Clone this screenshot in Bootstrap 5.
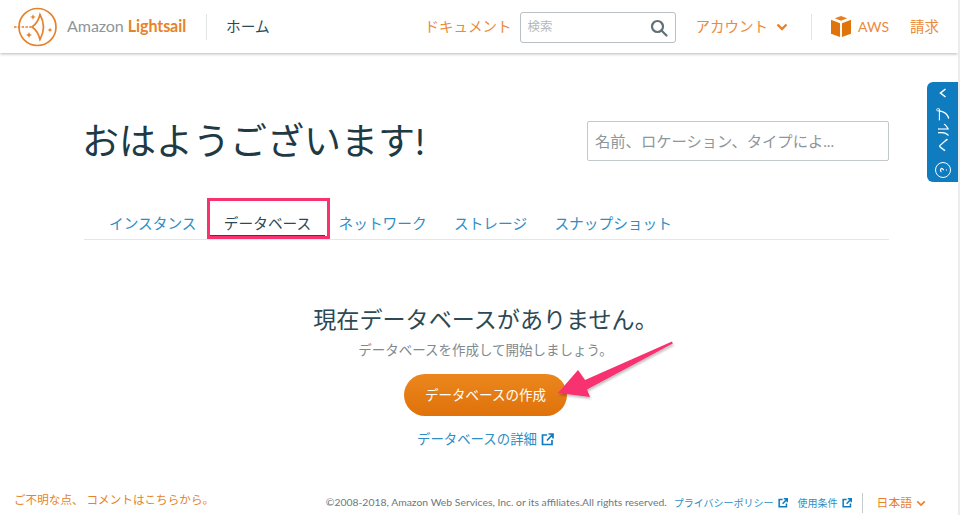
<!DOCTYPE html>
<html lang="ja">
<head>
    <meta charset="UTF-8">
    <meta name="viewport" content="width=device-width, initial-scale=1.0">
    <title>Amazon Lightsail</title>
    <link href="https://cdn.jsdelivr.net/npm/bootstrap@5.3.2/dist/css/bootstrap.min.css" rel="stylesheet">
    <style>
        html { background: #ececec; }
        html, body { height: 515px; overflow: hidden; }
        body {
            font-family: Lato, "Noto Sans CJK JP", sans-serif;
            font-weight: 400;
            color: #2b4a55;
            background: #fff;
            position: relative;
            width: 958px;
        }
        a { text-decoration: none; }

        /* top bar */
        .top-bar {
            height: 53px;
            padding: 0 19px 0 14px;
            background: #fff;
            box-shadow: 0 1px 3px rgba(0, 0, 0, .28);
            font-size: 14.5px;
        }
        .brand { font-size: 16.1px; color: #8d9699; margin-left: 9px; letter-spacing: -.1px; }
        .brand b { color: #e8822a; font-weight: 700; }
        .top-bar .sep { width: 1px; height: 26px; background: #e1e4e5; }
        .home-link { color: #2b4a55; margin-left: 19px; font-size: 14.7px; }
        .orange { color: #ea8a3c; }
        .top-search { width: 156px; height: 31px; border: 1px solid #b9c0c3; border-radius: 3px; padding: 0 7px; margin: 2px 20px 0 8px; }
        .top-search span { font-size: 12.5px; color: #b5b9bb; }
        .aws-link { font-size: 14px; margin-left: 7px; }

        /* greeting and tabs */
        .content { padding: 0 69px 0 84px; }
        .hello-row { padding-top: 68px; height: 148px; }
        .hello-row h1 { font-size: 37px; font-weight: 400; margin: -1px 0 0 -2px; line-height: 42px; color: #1e3a45; }
        .filter-box { width: 302px; height: 40px; border: 1px solid #c3c8ca; border-radius: 2px; padding: 0 7px; font-size: 15.3px; color: #8e979b; }
        .tabs { height: 39px; border-bottom: 1px solid #e4e6e7; padding-left: 25px; font-size: 14.7px; gap: 27.3px; }
        .tabs .nav-link { padding: 12px 0 0; color: #2e8ec4; line-height: 20px; height: 36px; }
        .tabs .nav-link.active { color: #2b4a55; border-bottom: 2px solid #2b4a55; padding: 12px 14px 0; margin: 0 -14px; }

        /* empty state */
        .empty { padding-top: 62px; margin-left: -2px; }
        .empty h2 { font-size: 23.1px; font-weight: 400; line-height: 34px; margin: 0; color: #2b4a55; }
        .empty p { font-size: 13.5px; color: #7f8a8f; margin: 5px 0 14px; line-height: 19px; }
        .btn-create {
            width: 163px; height: 42px; border: 0; border-radius: 21px; padding: 0;
            background: linear-gradient(#ea871d, #e0720a); color: #fff; font-size: 13.5px;
        }
        .btn-create:hover { background: #e0720a; color: #fff; }
        .detail-link { color: #2e8ec4; font-size: 13.4px; margin-top: 13px; line-height: 20px; }
        .ext { color: #0f7cc0; }

        /* footer */
        .page-foot { position: absolute; left: 14px; right: 32px; top: 490px; height: 26px; }
        .page-foot .note { font-size: 11.6px; color: #e8822a; margin-bottom: 6px; }
        .page-foot .copy { color: #6d777c; font-size: 10.4px; }
        .page-foot a { color: #2e8ec4; font-size: 10px; }
        .page-foot .ext { margin-left: 4px; }
        .page-foot .gap-a { margin-left: 7px; }
        .page-foot .gap-b { margin-left: 10px; }
        .page-foot .vbar { width: 1px; height: 20px; background: #c6cbcd; margin: 0 14px 0 10px; }
        .page-foot .lang { color: #e8822a; font-size: 11.8px; }

        /* help tab on the right edge */
        .help-tab {
            position: absolute; left: 927px; top: 82px; width: 31px; height: 100px;
            background: #0f7cc0; border-radius: 6px 0 0 6px; color: #fff; padding: 6px 0 3px;
        }
        .help-tab .label { writing-mode: vertical-rl; text-orientation: sideways; transform: rotate(180deg); font-size: 14px; line-height: 1; letter-spacing: 1px; }

        /* screenshot annotations */
        .mark-box { position: absolute; left: 207px; top: 198px; width: 123px; height: 41px; border: 3px solid #f8316f; }
        .mark-arrow { position: absolute; left: 540px; top: 330px; }
    </style>
</head>
<body>

<nav class="navbar top-bar d-flex align-items-center flex-nowrap">
    <div class="d-flex align-items-center">
        <svg width="44" height="40" viewBox="0 0 44 40" fill="none" stroke="#e8822a">
            <circle cx="23.500" cy="20" r="18.500" stroke-width="1.700"/>
            <path d="M0 20h17" stroke-width="1.500" stroke-dasharray="2.500 1.300"/>
            <path d="M18 20Q24 16 26 7.500Q33 20 26 32.500Q24 24 18 20z" fill="#fff" stroke-width="1.700"/>
            <path d="M19 7l.8 2.200 2.200.8-2.200.8-.8 2.200-.8-2.200-2.200-.8 2.200-.8zM15 25l.9 2.100 2.100.9-2.100.9-.9 2.100-.9-2.100-2.100-.9 2.100-.9zM36 20.500l.7 1.800 1.800.7-1.800.7-.7 1.800-.7-1.800-1.800-.7 1.800-.7z" fill="#e8822a" stroke="none"/>
        </svg>
        <span class="brand">Amazon <b>Lightsail</b></span>
        <span class="sep" style="margin-left:20px"></span>
        <a class="home-link" href="#">ホーム</a>
    </div>
    <div class="d-flex align-items-center">
        <a class="orange" href="#">ドキュメント</a>
        <div class="top-search d-flex align-items-center justify-content-between">
            <span>検索</span>
            <svg width="18" height="18" viewBox="0 0 18 18" fill="none" stroke="#5f7076" stroke-width="2.200">
                <circle cx="7.500" cy="7.500" r="5.500"/>
                <path d="M11.500 11.500L16.500 16.500" stroke-linecap="round"/>
            </svg>
        </div>
        <a class="orange" href="#">アカウント</a>
        <svg class="ms-2" width="12" height="8" viewBox="0 0 12 8" fill="none" stroke="#e8822a" stroke-width="2.400"><path d="M1.500 1.500L6 6l4.500-4.500"/></svg>
        <span class="sep" style="margin:0 19px 0 23px"></span>
        <svg width="20" height="21" viewBox="0 0 21 22">
            <path d="M10.500 0L17 2.400 10.500 5 4 2.400z" fill="#e8801a"/>
            <path d="M0 4l9.500 3.500V22L0 18.500z" fill="#e0740c"/>
            <path d="M21 4l-9.500 3.500V22l9.500-3.500z" fill="#e0740c"/>
        </svg>
        <a class="orange aws-link" href="#">AWS</a>
        <a class="orange" style="margin-left:21px" href="#">請求</a>
    </div>
</nav>

<div class="content">
    <div class="hello-row d-flex justify-content-between align-items-start">
        <h1>おはようございます!</h1>
        <div class="filter-box d-flex align-items-center">名前、ロケーション、タイプによ...</div>
    </div>

    <ul class="nav tabs flex-nowrap">
        <li class="nav-item"><a class="nav-link" href="#">インスタンス</a></li>
        <li class="nav-item"><a class="nav-link active" href="#">データベース</a></li>
        <li class="nav-item"><a class="nav-link" href="#">ネットワーク</a></li>
        <li class="nav-item"><a class="nav-link" href="#">ストレージ</a></li>
        <li class="nav-item"><a class="nav-link" href="#">スナップショット</a></li>
    </ul>

    <div class="empty d-flex flex-column align-items-center text-center">
        <h2>現在データベースがありません。</h2>
        <p>データベースを作成して開始しましょう。</p>
        <button class="btn btn-create">データベースの作成</button>
        <a class="detail-link d-flex align-items-center gap-1" href="#">データベースの詳細
            <svg class="ext" width="13" height="13" viewBox="0 0 13 13" fill="none" stroke="currentColor" stroke-width="1.700">
                <path d="M6 2H1.500v9.500H11V7M6 7.500L11.500 1.500M7.500 1h4.500v4.500"/>
            </svg>
        </a>
    </div>
</div>

<footer class="page-foot d-flex align-items-center justify-content-between">
    <span class="note">ご不明な点、 コメントはこちらから。</span>
    <div class="d-flex align-items-center">
        <span class="copy">©2008-2018, Amazon Web Services, Inc. or its affiliates.All rights reserved.</span>
        <a class="gap-a" href="#">プライバシーポリシー</a>
        <svg class="ext" width="10" height="10" viewBox="0 0 13 13" fill="none" stroke="currentColor" stroke-width="2"><path d="M6 2H1.500v9.500H11V7M6 7.500L11.500 1.500M7.500 1h4.500v4.500"/></svg>
        <a class="gap-b" href="#">使用条件</a>
        <svg class="ext" width="10" height="10" viewBox="0 0 13 13" fill="none" stroke="currentColor" stroke-width="2"><path d="M6 2H1.500v9.500H11V7M6 7.500L11.500 1.500M7.500 1h4.500v4.500"/></svg>
        <span class="vbar"></span>
        <span class="lang">日本語</span>
        <svg class="ms-1" width="10" height="7" viewBox="0 0 12 8" fill="none" stroke="#e8822a" stroke-width="2"><path d="M1.500 1.500L6 6l4.500-4.500"/></svg>
    </div>
</footer>

<div class="help-tab d-flex flex-column align-items-center justify-content-between">
    <svg width="8" height="10" viewBox="0 0 8 10" fill="none" stroke="#fff" stroke-width="1.600"><path d="M6.500 1L1.500 5l5 4"/></svg>
    <span class="label">ヘルプ</span>
    <svg width="18" height="18" viewBox="0 0 18 18" fill="none" stroke="#fff" stroke-width="1"><circle cx="9" cy="9" r="7.500"/><g transform="rotate(-90 9 9)"><path d="M7 7.500c.3-1 3-1.500 3.500 0 .3 1-1.500 1.500-1.500 2.500M9 12v1" stroke-width="1.200"/></g></svg>
</div>

<div class="mark-box"></div>
<svg class="mark-arrow" width="140" height="80" viewBox="0 0 140 80">
    <defs><filter id="sh" x="-10%" y="-10%" width="130%" height="140%"><feDropShadow dx="1" dy="2" stdDeviation="1.200" flood-color="#000" flood-opacity=".25"/></filter></defs>
    <path d="M132 11.500L45 50 38 40 18 63 50 67 47 59.500 132.800 13.500z" fill="#f8316f" filter="url(#sh)"/>
</svg>

<script src="https://cdn.jsdelivr.net/npm/bootstrap@5.3.2/dist/js/bootstrap.bundle.min.js"></script>
</body>
</html>
